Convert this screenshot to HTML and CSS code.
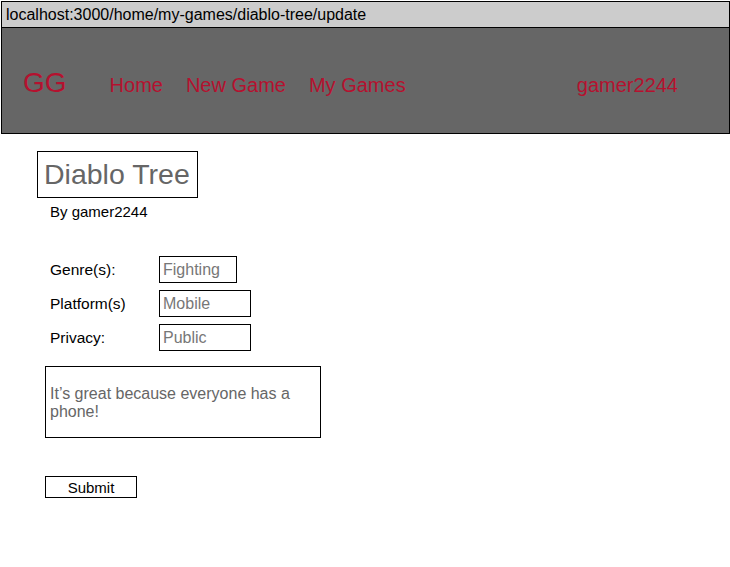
FILE: index.html
```html
<!DOCTYPE html>
<html>
<head>
<meta charset="utf-8">
<link rel="stylesheet" href="styles.css">
</head>
<body>
<div class="frame">
  <div class="urlbar">localhost:3000/home/my-games/diablo-tree/update</div>
  <nav class="nav">
    <span class="logo">GG</span>
    <a class="link first">Home</a>
    <a class="link">New Game</a>
    <a class="link">My Games</a>
    <a class="link user">gamer2244</a>
  </nav>
</div>
<main class="content">
  <h1 class="title">Diablo Tree</h1>
  <p class="byline">By gamer2244</p>
  <div class="form">
    <label class="label">Genre(s):</label>
    <div class="field w78">Fighting</div>
    <label class="label">Platform(s)</label>
    <div class="field w92">Mobile</div>
    <label class="label">Privacy:</label>
    <div class="field w92">Public</div>
  </div>
  <div class="desc">It’s great because everyone has a phone!</div>
  <button class="submit">Submit</button>
</main>
</body>
</html>
```

FILE: styles.css
```css
html, body {
  margin: 0;
  padding: 0;
  background: #fff;
  font-family: "Liberation Sans", Arial, Helvetica, sans-serif;
}
.frame {
  margin: 1px 0 0 1px;
  width: 729px;
  border: 1px solid #000;
  box-sizing: border-box;
}
.urlbar {
  background: #cccccc;
  height: 25px;
  line-height: 25px;
  font-size: 16px;
  color: #000;
  padding-left: 4px;
  border-bottom: 1px solid #000;
}
.nav {
  background: #666666;
  height: 105px;
  box-sizing: border-box;
  display: flex;
  align-items: baseline;
  padding: 39px 51px 0 21px;
  color: #b5112f;
}
.logo {
  font-size: 28px;
  line-height: 32px;
  margin-right: 43px;
}
.link {
  font-size: 20px;
  line-height: 23px;
  margin-right: 23px;
}
.link.user {
  margin-left: auto;
  margin-right: 0;
}
.content {
  padding: 17px 0 0 37px;
}
.title {
  display: inline-block;
  margin: 0;
  font-weight: normal;
  font-size: 28.5px;
  line-height: 32px;
  color: #666;
  border: 1px solid #000;
  padding: 6px 5px 7px 6px;
  width: 161px;
  box-sizing: border-box;
  white-space: nowrap;
}
.byline {
  margin: 5px 0 0 13px;
  font-size: 15px;
  line-height: 17px;
  color: #000;
}
.form {
  margin: 36px 0 0 13px;
  display: grid;
  grid-template-columns: 109px auto;
  row-gap: 7px;
  align-items: center;
  justify-items: start;
}
.label {
  font-size: 15.5px;
  color: #000;
}
.field {
  height: 27px;
  box-sizing: border-box;
  border: 1px solid #000;
  font-size: 16px;
  line-height: 25px;
  color: #777;
  padding-left: 3px;
}
.w78 { width: 78px; }
.w92 { width: 92px; }
.desc {
  margin: 15px 0 0 8px;
  width: 276px;
  height: 72px;
  box-sizing: border-box;
  border: 1px solid #000;
  padding: 18px 20px 0 4px;
  font-size: 16px;
  line-height: 18.4px;
  color: #666;
}
.submit {
  display: block;
  margin: 38px 0 0 8px;
  width: 92px;
  height: 22px;
  box-sizing: border-box;
  border: 1px solid #000;
  background: #fff;
  padding: 0;
  font-family: "Liberation Sans", Arial, Helvetica, sans-serif;
  font-size: 15px;
  color: #000;
  border-radius: 0;
}
```
